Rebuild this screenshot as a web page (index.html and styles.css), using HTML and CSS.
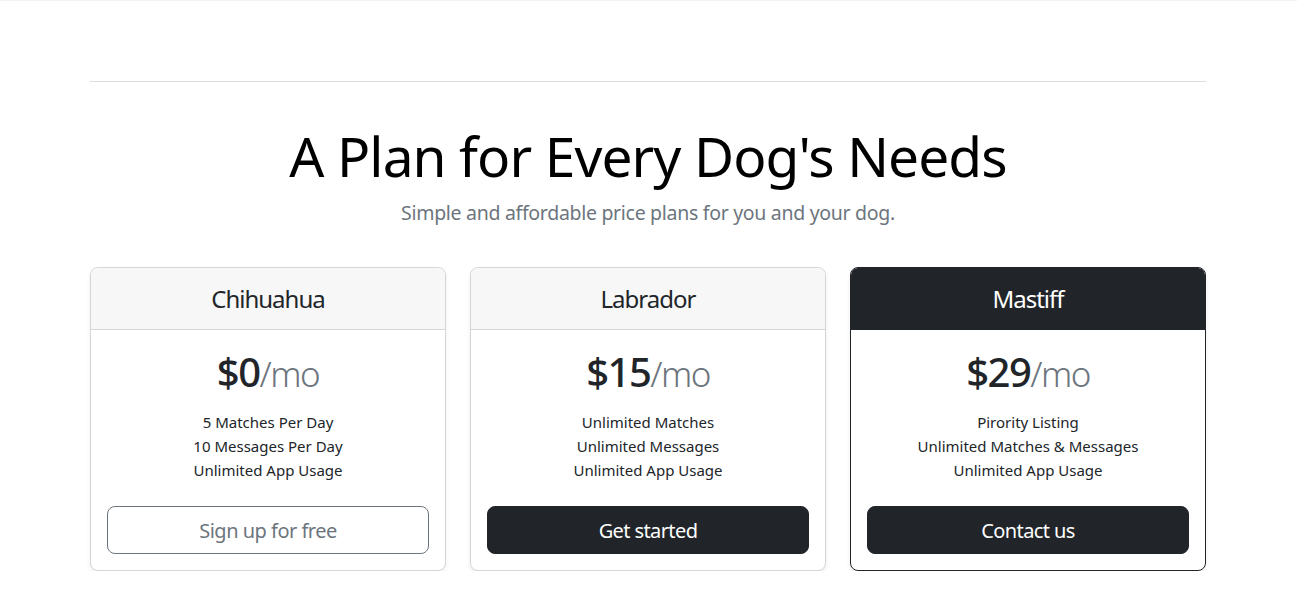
FILE: index.html
```html
<!DOCTYPE html>
<html lang="en">
<head>
<meta charset="utf-8">
<title>Pricing</title>
<link rel="stylesheet" href="styles.css">
</head>
<body>
<div class="topbar"></div>
<main class="container">
  <hr class="divider">
  <div class="pricing-header">
    <h1 class="title">A Plan for Every Dog's Needs</h1>
    <p class="lead">Simple and affordable price plans for you and your dog.</p>
  </div>
  <div class="cards">
    <div class="card">
      <div class="card-header"><h4 class="plan">Chihuahua</h4></div>
      <div class="card-body">
        <h1 class="price">$0<small class="per">/mo</small></h1>
        <ul class="features">
          <li>5 Matches Per Day</li>
          <li>10 Messages Per Day</li>
          <li>Unlimited App Usage</li>
        </ul>
        <button class="btn btn-outline" type="button">Sign up for free</button>
      </div>
    </div>
    <div class="card">
      <div class="card-header"><h4 class="plan">Labrador</h4></div>
      <div class="card-body">
        <h1 class="price">$15<small class="per">/mo</small></h1>
        <ul class="features">
          <li>Unlimited Matches</li>
          <li>Unlimited Messages</li>
          <li>Unlimited App Usage</li>
        </ul>
        <button class="btn btn-dark" type="button">Get started</button>
      </div>
    </div>
    <div class="card card-dark">
      <div class="card-header header-dark"><h4 class="plan">Mastiff</h4></div>
      <div class="card-body">
        <h1 class="price">$29<small class="per">/mo</small></h1>
        <ul class="features">
          <li>Pirority Listing</li>
          <li>Unlimited Matches &amp; Messages</li>
          <li>Unlimited App Usage</li>
        </ul>
        <button class="btn btn-dark" type="button">Contact us</button>
      </div>
    </div>
  </div>
</main>
</body>
</html>
```

FILE: styles.css
```css
* { box-sizing: border-box; }

body {
  margin: 0;
  font-family: "Noto Sans", "Open Sans", sans-serif;
  font-size: 16px;
  line-height: 1.5;
  color: #212529;
  background: #fff;
}

.topbar {
  height: 1px;
  background: #f2f2f2;
}

.container {
  max-width: 1140px;
  margin: 0 auto;
  padding: 64px 12.5px 0 11.5px;
}

.divider {
  margin: 16px 0 0;
  border: 0;
  border-top: 1px solid #dcdcdc;
  height: 0;
}

.pricing-header {
  text-align: center;
  padding: 40px 16px 24px;
}

.title {
  margin: 0 0 9px;
  font-size: 55px;
  font-weight: 400;
  line-height: 67px;
  letter-spacing: -0.9px;
  color: #000;
}

.lead {
  margin: 0 0 15px;
  font-size: 19.5px;
  line-height: 30px;
  letter-spacing: -0.3px;
  color: #6c757d;
}

.cards {
  display: grid;
  grid-template-columns: repeat(3, 1fr);
  gap: 24px;
  text-align: center;
}

.card {
  border: 1px solid #d6d6d6;
  border-radius: 8px;
  box-shadow: 0 2px 4px rgba(0, 0, 0, 0.075);
  overflow: hidden;
  background: #fff;
}

.card-dark {
  border-color: #212529;
}

.card-header {
  background: #f7f7f7;
  border-bottom: 1px solid #d6d6d6;
  padding: 17px 16px 15px;
}

.header-dark {
  background: #212529;
  border-bottom-color: #212529;
  color: #fff;
}

.plan {
  margin: 0;
  font-size: 24px;
  font-weight: 400;
  line-height: 1.2;
  letter-spacing: -1px;
}

.card-body {
  padding: 16px;
}

.price {
  margin: 2px 0 4px;
  font-size: 40px;
  font-weight: 500;
  line-height: 1.2;
  letter-spacing: -1.5px;
}

.per {
  font-size: 35px;
  font-weight: 300;
  color: #6c757d;
}

.features {
  list-style: none;
  padding: 0;
  margin: 14px 0 24px;
  font-size: 15px;
  line-height: 24px;
}

.btn {
  display: block;
  width: 100%;
  padding: 9px 16px 7px;
  font-family: inherit;
  font-size: 20px;
  line-height: 30px;
  border-radius: 8px;
  border: 1px solid transparent;
  cursor: pointer;
}

.btn-outline {
  background: #fff;
  color: #6c757d;
  border-color: #6c757d;
  letter-spacing: -0.5px;
}

.btn-dark {
  background: #212529;
  border-color: #212529;
  color: #fff;
  letter-spacing: -0.6px;
}
```
